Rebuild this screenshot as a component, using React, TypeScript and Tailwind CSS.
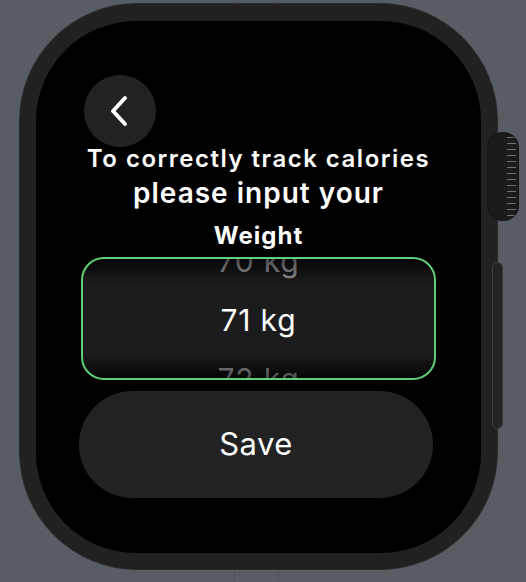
export default function App() {
  const ribs = Array.from({ length: 14 });

  return (
    <div
      className="relative w-[526px] h-[582px] overflow-hidden bg-[#585c63] pt-[3px] pl-[19px]"
      style={{ fontFamily: "Inter, 'Noto Sans', sans-serif" }}
    >
      {/* strap seams */}
      <div className="absolute top-0 left-[234px] w-[45px] h-[4px] border-x border-[#50545a]" />
      <div className="absolute bottom-0 left-[234px] w-[45px] h-[12px] border-x border-[#50545a]" />

      {/* case */}
      <div className="relative w-[479px] h-[567px] rounded-[118px] bg-[#212121] border border-[#2c2c2c] pt-[17px] px-[16px] pb-[16px]">
        {/* screen */}
        <div className="w-full h-full rounded-[100px] bg-black flex flex-col text-white pt-[54px]">
          <button className="ml-[48px] w-[72px] h-[72px] rounded-full bg-[#222222] flex items-center justify-center">
            <svg width="22" height="32" viewBox="0 0 22 32" fill="none">
              <path
                d="M16 3 L4 16 L16 29"
                stroke="white"
                strokeWidth="4"
                strokeLinecap="round"
                strokeLinejoin="round"
              />
            </svg>
          </button>

          <p className="mt-[-2px] text-center text-[24px] leading-[28px] font-semibold tracking-[1.5px] whitespace-nowrap">
            To correctly track calories
          </p>
          <p className="mt-[3px] text-center text-[28px] leading-[34px] font-semibold tracking-[1px] whitespace-nowrap">
            please input your
          </p>
          <p className="mt-[12px] text-center text-[24px] leading-[28px] font-bold tracking-[1px]">
            Weight
          </p>

          {/* picker */}
          <div className="mt-[7px] ml-[45px] w-[355px] h-[123px] rounded-[23px] border-[2.5px] border-[#5fcf78] overflow-hidden relative bg-[linear-gradient(to_bottom,#0d0d0e_0%,#1c1c1e_22%,#1c1c1e_78%,#0d0d0e_100%)]">
            <div className="h-full flex flex-col items-center justify-center pt-[4px]">
              <div className="h-[59px] shrink-0 flex items-center text-[30px] tracking-[0.8px] text-[#8a8a8e]">70 kg</div>
              <div className="h-[59px] shrink-0 flex items-center text-[30px] tracking-[0.8px] text-white">71 kg</div>
              <div className="h-[59px] shrink-0 flex items-center text-[30px] tracking-[0.8px] text-[#8a8a8e]">72 kg</div>
            </div>
            <div className="absolute inset-0 pointer-events-none bg-[linear-gradient(to_bottom,rgba(0,0,0,0.45)_0%,rgba(0,0,0,0)_18%,rgba(0,0,0,0)_82%,rgba(0,0,0,0.45)_100%)]" />
          </div>

          <button className="mt-[11px] ml-[43px] w-[354px] h-[107px] rounded-full bg-[#222224] text-[31px] text-white tracking-[0.5px]">
            Save
          </button>
        </div>

        {/* digital crown */}
        <div className="absolute left-[467px] top-[128px] w-[32px] h-[89px] rounded-[15px] bg-[#1b1b1b] border border-[#151515] flex flex-col justify-center items-end gap-[4.5px] pr-[2px] overflow-hidden">
          {ribs.map((_, i) => (
            <div key={i} className="w-[9px] h-[1.5px] bg-[#6e6e6e]" />
          ))}
        </div>

        {/* side button */}
        <div className="absolute left-[472px] top-[258px] w-[11px] h-[167px] rounded-full bg-[#232323] border border-[#3e3e3e]" />
      </div>
    </div>
  );
}
